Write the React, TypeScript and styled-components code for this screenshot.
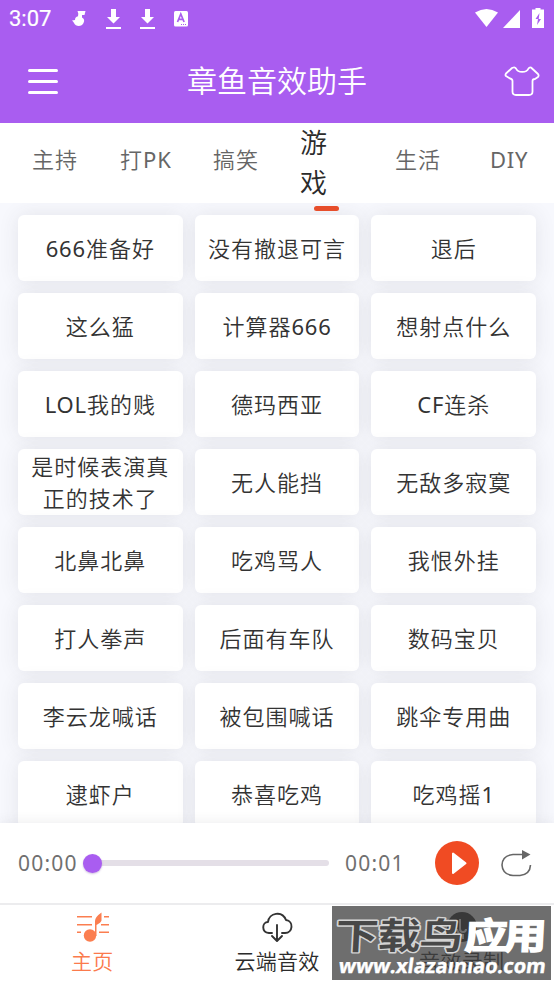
import React from "react";
import styled, { createGlobalStyle, css } from "styled-components";

const Global = createGlobalStyle`
  * { box-sizing: border-box; }
  body { margin: 0; background: #fff; font-family: "Noto Sans", "Noto Sans CJK SC", sans-serif; font-weight: 350; }
`;

const Screen = styled.div`
  width: 554px;
  height: 984px;
  display: flex;
  flex-direction: column;
  overflow: hidden;
  background: #f7f8fd;
`;

const Header = styled.header`
  height: 123px;
  flex: none;
  background: #a95df0;
  color: #fff;
`;

const StatusBar = styled.div`
  height: 38px;
  padding: 0 7px 0 9px;
  display: flex;
  justify-content: space-between;
`;

const StatusGroup = styled.div`
  display: flex;
  align-items: center;
`;

const Clock = styled.span`
  width: 60px;
  font: 400 22px/38px Roboto, sans-serif;
  -webkit-text-stroke: 0.2px #fff;
`;

const StatusIcons = styled.svg`
  display: block;
`;

const TitleBar = styled.div`
  height: 85px;
  display: grid;
  grid-template-columns: 100px 1fr 100px;
  align-items: center;
`;

const MenuButton = styled.button`
  margin: 1px 0 0 28px;
  padding: 0;
  width: 30px;
  height: 25px;
  border: 0;
  background: none;
  display: flex;
  flex-direction: column;
  justify-content: space-between;
`;

const MenuLine = styled.span`
  width: 30px;
  height: 3px;
  border-radius: 1.5px;
  background: #fff;
`;

const Title = styled.h1`
  margin: 1px 0 0;
  text-align: center;
  font-size: 30px;
  line-height: 44px;
  font-weight: 350;
`;

const SkinButton = styled.button`
  margin: 1px 0 0 50px;
  padding: 0;
  border: 0;
  background: none;
  height: 30px;
  width: 36px;
`;

const Tabs = styled.nav`
  height: 80px;
  flex: none;
  background: #fff;
  padding-left: 32px;
  display: grid;
  grid-template-columns: 88px 93px 87px 95px 95px 1fr;
  align-items: center;
`;

const Latin = styled.span`
  font-weight: 400;
  letter-spacing: 0.8px;
`;

const Tab = styled.div<{ $active?: boolean }>`
  position: relative;
  font-size: 22px;
  letter-spacing: 1px;
  line-height: 40px;
  margin-top: -9px;
  color: #666;
  ${(p) =>
    p.$active &&
    css`
      font-size: 27px;
      width: 52px;
      margin-top: -1px;
      color: #2b2b2b;
      &::after {
        content: "";
        position: absolute;
        left: 14px;
        bottom: -8px;
        width: 25px;
        height: 5px;
        border-radius: 3px;
        background: #e74e2b;
      }
    `}
`;

const Board = styled.main`
  height: 620px;
  flex: none;
  overflow: hidden;
  padding: 12px 18px 0;
  display: grid;
  grid-template-columns: repeat(3, 1fr);
  grid-auto-rows: 66px;
  gap: 12px;
`;

const SoundCard = styled.div`
  background: #fff;
  border-radius: 6px;
  box-shadow: 0 0 20px rgba(60, 60, 70, 0.1);
  display: flex;
  align-items: center;
  justify-content: center;
  text-align: center;
  padding: 0 12px 1px;
  font-size: 22px;
  line-height: 32px;
  letter-spacing: 1px;
  color: #333;
`;

const Player = styled.section`
  height: 80px;
  flex: none;
  position: relative;
  background: #fff;
  box-shadow: 0 0 12px rgba(60, 60, 70, 0.1);
  padding: 0 21px 0 18px;
  display: flex;
  align-items: center;
`;

const Time = styled.span`
  flex: none;
  font-size: 21px;
  font-weight: 400;
  letter-spacing: 1.2px;
  color: #707070;
  width: 65px;
  padding-bottom: 1px;
`;

const Track = styled.div`
  flex: none;
  width: 246px;
  height: 6px;
  margin-right: 16px;
  border-radius: 3px;
  background: #e4dfe7;
  display: flex;
  align-items: center;
`;

const Knob = styled.div`
  width: 19px;
  height: 19px;
  border-radius: 50%;
  background: #a95df0;
  box-shadow: 0 1px 2px rgba(90, 40, 150, 0.3);
`;

const PlayButton = styled.button`
  flex: none;
  width: 44px;
  height: 44px;
  margin: 0 21px 0 25px;
  padding: 0;
  border: 0;
  border-radius: 50%;
  background: #f04b23;
`;

const BottomNav = styled.nav`
  position: relative;
  height: 81px;
  flex: none;
  background: #fff;
  border-top: 2px solid #ececee;
  display: grid;
  grid-template-columns: repeat(3, 1fr);
`;

const NavItem = styled.div<{ $active?: boolean }>`
  display: flex;
  flex-direction: column;
  align-items: center;
  padding-top: 4px;
  font-size: 21px;
  line-height: 30px;
  letter-spacing: 0.3px;
  color: ${(p) => (p.$active ? "#fb7a4c" : "#2b2b2b")};
`;

const NavLabel = styled.span`
  margin-top: 1px;
`;

const Watermark = styled.div`
  position: absolute;
  left: 332px;
  top: 1px;
  width: 219px;
  height: 74px;
  background: rgba(65, 65, 65, 0.76);
`;

const Art = styled.svg`
  display: block;
  flex: none;
`;

const sounds = [
  "666准备好", "没有撤退可言", "退后",
  "这么猛", "计算器666", "想射点什么",
  "LOL我的贱", "德玛西亚", "CF连杀",
  "是时候表演真正的技术了", "无人能挡", "无敌多寂寞",
  "北鼻北鼻", "吃鸡骂人", "我恨外挂",
  "打人拳声", "后面有车队", "数码宝贝",
  "李云龙喊话", "被包围喊话", "跳伞专用曲",
  "逮虾户", "恭喜吃鸡", "吃鸡摇1",
];

const tabs = ["主持", "打PK", "搞笑", "游戏", "生活", "DIY"];

// Latin letters and digits are set one weight above the Chinese text.
function Mixed({ text }: { text: string }) {
  return (
    <span>
      {text.split(/([A-Z0-9]+)/).filter(Boolean).map((part, i) =>
        /[A-Z0-9]/.test(part) ? <Latin key={i}>{part}</Latin> : part
      )}
    </span>
  );
}

export default function App() {
  return (
    <Screen>
      <Global />
      <Header>
        <StatusBar>
          <StatusGroup>
            <Clock>3:07</Clock>
            <StatusIcons width="122" height="38" fill="#fff">
              <path d="M8.500 11h8l-1 4h-2.500v2.500c2.200 1 2.800 3 1.500 5.500-1.500 4-8 4-9.500 0-.5-1-1.500-2-2-2.500l3-.5c0-2 1-3.500 3-3.700l.3-2.500z" />
              <path d="M42 9h5v8h4l-6.500 6.500-6.500-6.500h4zM37 27h15v2h-15z" />
              <path d="M76 9h5v8h4l-6.500 6.500-6.500-6.500h4zM71 27h15v2h-15z" />
              <rect x="105" y="11" width="14" height="15.500" rx="1.500" />
              <path d="M108.500 22l3.300-8 3.300 8M109.800 19.300h4" fill="none" stroke="#a95df0" strokeWidth="1.700" />
              <path d="M112 24.500h6" stroke="#a95df0" strokeDasharray="1 1" />
            </StatusIcons>
          </StatusGroup>
          <StatusIcons width="74" height="38" fill="#fff">
            <path d="M2 12.500Q13.500 5.500 25 12.500L13.500 27z" />
            <path d="M47 10v18H30z" />
            <path d="M60 9.500h2.500V8h5v1.500H71V28H59V9.500z" />
            <path d="M66.500 13l-4 6h2.500l-1 6 4-6h-2.300z" fill="#a95df0" />
          </StatusIcons>
        </StatusBar>
        <TitleBar>
          <MenuButton><MenuLine /><MenuLine /><MenuLine /></MenuButton>
          <Title>章鱼音效助手</Title>
          <SkinButton>
            <Art width="36" height="30" fill="none" stroke="#fff" strokeWidth="1.800" strokeLinejoin="round">
              <path d="M9.500 1.500Q11 1 12 2.500C14 7 22.500 7 24.500 2.500Q25.500 1 27 1.500L34 8Q35.200 9.500 34 11L31 13Q28.500 13 28.500 15V25.500Q28.500 29 25 29H12Q8.500 29 8.500 25.500V15Q8.500 13 6 12.500L2 10Q1 9 2 7.500L8 2Z" />
            </Art>
          </SkinButton>
        </TitleBar>
      </Header>
      <Tabs>
        {tabs.map((t) => <Tab key={t} $active={t === "游戏"}><Mixed text={t} /></Tab>)}
      </Tabs>
      <Board>
        {sounds.map((s) => <SoundCard key={s}><Mixed text={s} /></SoundCard>)}
      </Board>
      <Player>
        <Time>00:00</Time>
        <Track><Knob /></Track>
        <Time>00:01</Time>
        <PlayButton>
          <Art width="44" height="44"><path d="M18 12.500v19.500l12.500-9.700z" fill="#fff" stroke="#fff" strokeWidth="2" strokeLinejoin="round" /></Art>
        </PlayButton>
        <Art width="34" height="30" fill="none" stroke="#666" strokeWidth="1.600">
          <path d="M24 6.500H13Q2.500 7.500 2 17Q2.500 26.500 13 27.500H20Q30 26.500 30.500 17" />
          <path d="M22 2l8.500 4.500-8.500 5z" fill="#666" stroke="none" />
        </Art>
      </Player>
      <BottomNav>
        <NavItem $active>
          <Art width="34" height="36" fill="#fb7e50">
            <path d="M2 7h15v1.600H2zM2 15h15v1.600H2zM2 22.500h4v1.600H2zM29 7h5v1.600h-5zM26 15h8v1.600h-8zM24 22.500h10v1.600H24z" />
            <circle cx="15" cy="26.500" r="6.200" />
            <path d="M20 27V12q0-4 6.500-8.500v8q-.5 2-5 4.500v11z" />
          </Art>
          <NavLabel>主页</NavLabel>
        </NavItem>
        <NavItem>
          <Art width="34" height="36" fill="none" stroke="#333" strokeWidth="1.900" strokeLinecap="round" strokeLinejoin="round">
            <path d="M12 24H9C1 23 2 13 8 13C9 4 22 1 26 11C34 12 33 24 25 24H22M17 16v15M12 27l5 5 5-5" />
          </Art>
          <NavLabel>云端音效</NavLabel>
        </NavItem>
        <NavItem>
          <Art width="34" height="36">
            <circle cx="17" cy="18" r="15" fill="#222" />
            <path d="M15 10v10a3 3 0 0 0 6 0M12 20q1 6 6 6v4" fill="none" stroke="#fff" strokeWidth="2" />
          </Art>
          <NavLabel>音效录制</NavLabel>
        </NavItem>
        <Watermark>
          <Art width="219" height="74" fontFamily='"Noto Sans CJK SC", sans-serif' fontWeight="700">
            <g transform="translate(3 42.500) skewX(-3) scale(1 0.84)">
              <text fontSize="43" textLength="127" fill="#484848" stroke="#d4d4d4" strokeWidth="3.500" strokeLinejoin="round" paintOrder="stroke">下载鸟</text>
              <text x="129" fontSize="43" textLength="82" fill="#fff" stroke="#fff" strokeWidth="1.800">应用</text>
            </g>
            <g transform="translate(6 67) skewX(-8)">
              <text fontSize="20" fontFamily='"Open Sans", sans-serif' fontWeight="700" textLength="207" lengthAdjust="spacingAndGlyphs" fill="#fff" stroke="#fff" strokeWidth="0.400">www.xlazaınıao.com</text>
            </g>
          </Art>
        </Watermark>
      </BottomNav>
    </Screen>
  );
}
